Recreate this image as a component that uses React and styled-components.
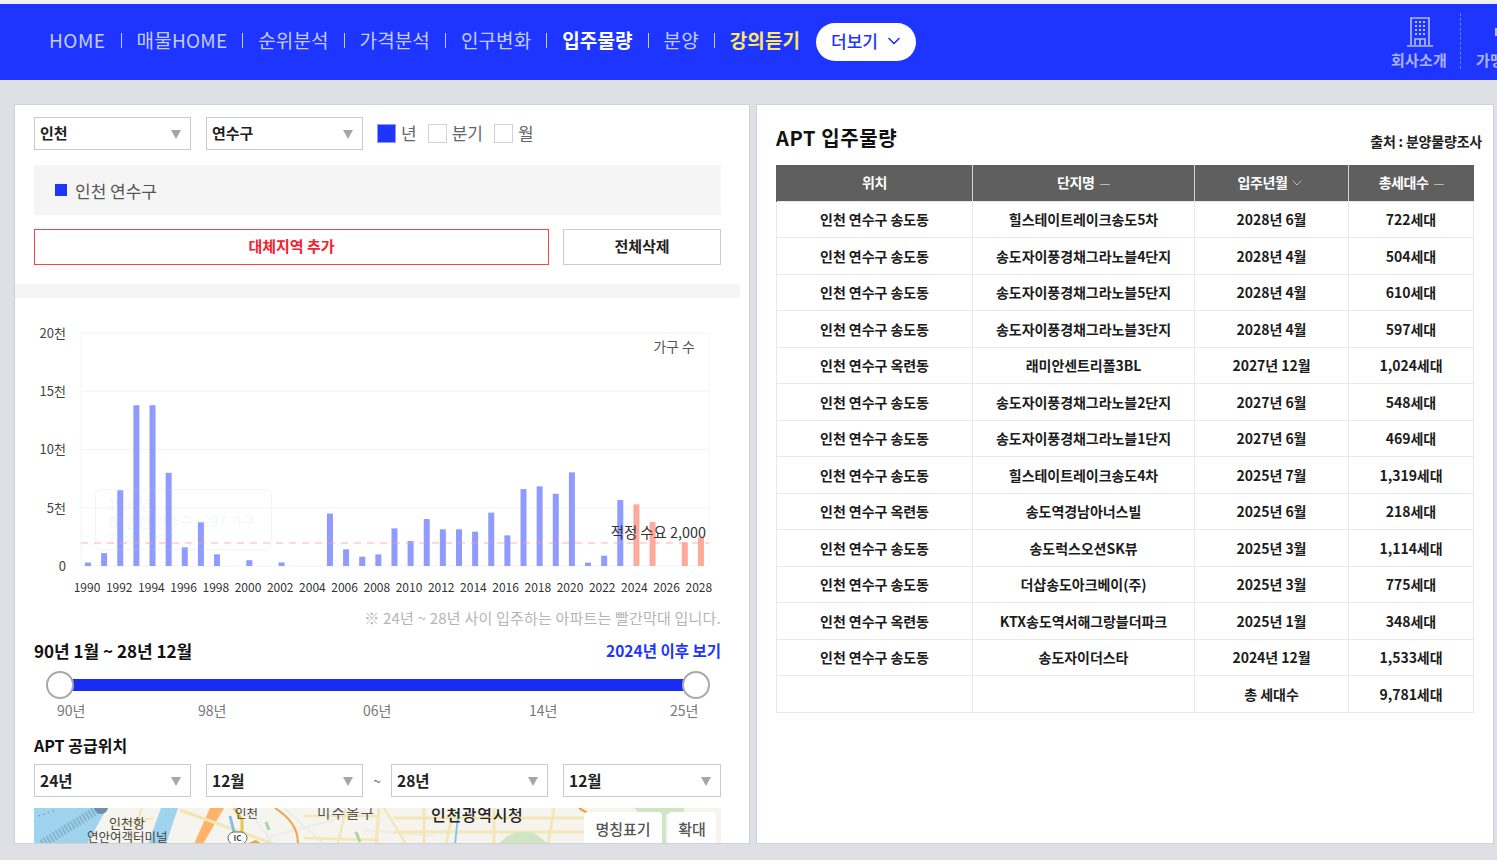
import React from "react";
import styled, { createGlobalStyle } from "styled-components";
import { ChevronDown } from "lucide-react";

const font = `"Noto Sans CJK KR", "Noto Sans", sans-serif`;

const GlobalStyle = createGlobalStyle`
  html, body {
    margin: 0;
    height: 860px;
    overflow: hidden;
    background: #dfe0e5;
    font-family: ${font};
  }
  * { box-sizing: border-box; }
`;

const menu = [
  { label: "HOME", spacing: 0.5 },
  { label: "매물HOME", spacing: 0.2 },
  { label: "순위분석" },
  { label: "가격분석" },
  { label: "인구변화" },
  { label: "입주물량", active: true },
  { label: "분양" },
  { label: "강의듣기", accent: true },
];

const rows = [
  ["인천 연수구 송도동", "힐스테이트레이크송도5차", "2028년 6월", "722세대"],
  ["인천 연수구 송도동", "송도자이풍경채그라노블4단지", "2028년 4월", "504세대"],
  ["인천 연수구 송도동", "송도자이풍경채그라노블5단지", "2028년 4월", "610세대"],
  ["인천 연수구 송도동", "송도자이풍경채그라노블3단지", "2028년 4월", "597세대"],
  ["인천 연수구 옥련동", "래미안센트리폴3BL", "2027년 12월", "1,024세대"],
  ["인천 연수구 송도동", "송도자이풍경채그라노블2단지", "2027년 6월", "548세대"],
  ["인천 연수구 송도동", "송도자이풍경채그라노블1단지", "2027년 6월", "469세대"],
  ["인천 연수구 송도동", "힐스테이트레이크송도4차", "2025년 7월", "1,319세대"],
  ["인천 연수구 옥련동", "송도역경남아너스빌", "2025년 6월", "218세대"],
  ["인천 연수구 송도동", "송도럭스오션SK뷰", "2025년 3월", "1,114세대"],
  ["인천 연수구 송도동", "더샵송도아크베이(주)", "2025년 3월", "775세대"],
  ["인천 연수구 옥련동", "KTX송도역서해그랑블더파크", "2025년 1월", "348세대"],
  ["인천 연수구 송도동", "송도자이더스타", "2024년 12월", "1,533세대"],
  ["", "", "총 세대수", "9,781세대"],
];

// 1990 ~ 2028
const supply = [
  297, 1100, 6500, 13800, 13800, 8000, 1600, 3750, 1000, 0, 500, 0, 300, 0, 0,
  4500, 1430, 800, 1000, 3230, 2150, 4030, 3150, 3150, 2950, 4580, 2630, 6600,
  6840, 6200, 8040, 290, 890, 5660, 5290, 3774, 0, 2041, 2433,
];

const Page = styled.div`
  width: 1497px;
  height: 860px;
  border-top: 4px solid #f1f1f3;
  overflow: hidden;
`;

const TopBar = styled.header`
  display: flex;
  height: 76px;
  background: #1e35ff;
  overflow: hidden;
`;

const Menu = styled.nav`
  flex: 0 0 1391px;
  display: flex;
  align-items: center;
  padding-left: 49px;
`;

const MenuItem = styled.a`
  margin-bottom: 6px;
  font-size: 19px;
  font-weight: ${(p) => (p.$strong ? 700 : 400)};
  letter-spacing: ${(p) => p.$spacing || 0.1}px;
  color: ${(p) => (p.$accent ? "#ffe95c" : p.$active ? "#fff" : "#c4ccff")};
  white-space: nowrap;
`;

const MenuBar = styled.i`
  width: 1px;
  height: 15px;
  margin: 0 15px 3px;
  background: #c4ccff;
`;

const MoreButton = styled.button`
  display: flex;
  align-items: center;
  gap: 6px;
  width: 100px;
  height: 38px;
  margin-left: 16px;
  padding: 0 0 3px 15px;
  border: 0;
  border-radius: 19px;
  background: #fff;
  color: #1e35ff;
  font: 500 17px ${font};
`;

const Utility = styled.div`
  flex: 0 0 ${(p) => (p.$cut ? "120px" : "70px")};
  display: flex;
  flex-direction: column;
  align-items: flex-start;
  height: ${(p) => (p.$cut ? "76px" : "56px")};
  margin: ${(p) => (p.$cut ? "0" : "9px 0 11px")};
  padding: ${(p) => (p.$cut ? "13px 0 0 15px" : "4px 0 0")};
  border-right: ${(p) => (p.$cut ? "0" : "1px dashed rgba(255,255,255,.35)")};
`;

const UtilityIcon = styled.svg`
  display: block;
  width: 58px;
  height: 30px;
  flex: none;
`;

const UtilityText = styled.span`
  margin-top: 4px;
  font-size: 15px;
  line-height: 18px;
  font-weight: 700;
  letter-spacing: 0.2px;
  color: #aab3ff;
  white-space: nowrap;
`;

const Content = styled.main`
  display: flex;
  gap: 6px;
  padding: 24px 0 0 14px;
`;

const Panel = styled.section`
  flex: none;
  width: ${(p) => p.$w}px;
  height: 740px;
  overflow: hidden;
  background: #fff;
  border: 1px solid #cfd1d8;
`;

const LeftPanel = styled(Panel)`
  padding: 12px 28px 0 19px;
`;

const RightPanel = styled(Panel)`
  padding: 20px 0 0 19px;
`;

const FilterRow = styled.div`
  display: flex;
  align-items: center;
  gap: 15px;
`;

const SelectBox = styled.div`
  position: relative;
  flex: none;
  width: 157px;
  height: 33px;
  padding-left: 5px;
  border: 1px solid #c6cad3;
  background: #fff;
  color: #222;
  font-size: 15px;
  font-weight: 700;
  line-height: 30px;
  &::after {
    content: "";
    position: absolute;
    top: 12px;
    right: 9px;
    border-top: 9px solid #a6a6a6;
    border-left: 5px solid transparent;
    border-right: 5px solid transparent;
  }
`;

const PeriodGroup = styled.div`
  display: flex;
  align-items: center;
  margin-left: -1px;
`;

const PeriodBox = styled.span`
  width: 19px;
  height: 19px;
  margin-left: ${(p) => (p.$first ? "0" : "11px")};
  border: 1px solid ${(p) => (p.$on ? "#8d98ff" : "#cfd2d9")};
  background: ${(p) => (p.$on ? "#1e35ff" : "#fff")};
`;

const PeriodLabel = styled.span`
  margin: -2px 0 0 5px;
  font-size: 17px;
  color: #666;
`;

const RegionBox = styled.div`
  display: flex;
  align-items: center;
  gap: 8px;
  height: 50px;
  margin-top: 15px;
  padding-left: 21px;
  background: #f5f5f5;
  color: #555;
  font-size: 17px;
`;

const RegionMark = styled.i`
  width: 12px;
  height: 12px;
  background: #1e35ff;
`;

const ActionRow = styled.div`
  display: flex;
  gap: 14px;
  margin-top: 14px;
`;

const ActionButton = styled.button`
  flex: ${(p) => (p.$danger ? "0 0 515px" : "1")};
  height: 36px;
  padding: 0 0 3px;
  border: 1px solid ${(p) => (p.$danger ? "#f0474b" : "#c9ccd3")};
  background: #fff;
  color: ${(p) => (p.$danger ? "#f5222d" : "#222")};
  font: 700 15px ${font};
`;

const Band = styled.div`
  height: 14px;
  margin: 19px -19px 0;
  background: #f5f5f6;
`;

const ChartWrap = styled.div`
  position: relative;
  height: 280px;
  margin-top: 22px;
`;

const ChartSvg = styled.svg`
  display: block;
  width: 687px;
  height: 280px;
  font-family: ${font};
`;

const GhostTip = styled.div`
  position: absolute;
  left: 61px;
  top: 169px;
  width: 177px;
  height: 61px;
  padding: 6px 12px;
  border: 1px solid rgba(190, 205, 255, 0.22);
  border-radius: 6px;
  color: rgba(170, 185, 245, 0.16);
  font-size: 14px;
  line-height: 17px;
  white-space: nowrap;
`;

const Note = styled.p`
  margin: 8px 0 0;
  color: #b5b5b5;
  font-size: 15px;
  letter-spacing: 0.2px;
  line-height: 20px;
  text-align: right;
`;

const RangeHead = styled.div`
  display: flex;
  justify-content: space-between;
  align-items: center;
  height: 24px;
  margin-top: 10px;
`;

const RangeTitle = styled.strong`
  color: #111;
  font-size: 17px;
  font-weight: 700;
`;

const RangeLink = styled.a`
  color: #1e35ff;
  font-size: 15.5px;
  font-weight: 700;
`;

const Slider = styled.div`
  position: relative;
  display: flex;
  align-items: center;
  height: 28px;
  margin: 9px 25px 0 26px;
`;

const SliderFill = styled.div`
  width: 100%;
  height: 12px;
  background: #1a2bf5;
`;

const SliderThumb = styled.span`
  position: absolute;
  top: 0;
  ${(p) => (p.$end ? "right: -14px;" : "left: -14px;")}
  width: 28px;
  height: 28px;
  border: 2px solid #a9a9a9;
  border-radius: 50%;
  background: #fff;
`;

const Ticks = styled.div`
  display: grid;
  grid-template-columns: 141px 165px 166px 141px 28px;
  height: 20px;
  margin-top: 1px;
  padding-left: 23px;
  color: #777;
  font-size: 14px;
  line-height: 20px;
  white-space: nowrap;
`;

const SubTitle = styled.h3`
  margin: 14px 0 0;
  color: #111;
  font-size: 16px;
  font-weight: 700;
  line-height: 22px;
`;

const RangeSelects = styled.div`
  display: flex;
  align-items: center;
  margin-top: 8px;
`;

const Tilde = styled.span`
  flex: 0 0 28px;
  color: #666;
  font-size: 13px;
  text-align: center;
`;

const RangeSelect = styled(SelectBox)`
  margin-right: ${(p) => p.$gap || 0}px;
  font-size: 15.5px;
  &:last-child {
    width: 158px;
  }
`;

const MapBox = styled.div`
  position: relative;
  height: 60px;
  margin-top: 11px;
`;

const MapSvg = styled.svg`
  display: block;
  width: 687px;
  height: 60px;
  font-family: ${font};
`;

const MapTools = styled.div`
  position: absolute;
  top: 4px;
  right: 5px;
  display: flex;
  gap: 6px;
`;

const MapTool = styled.button`
  width: ${(p) => p.$w}px;
  height: 40px;
  padding: 0 0 8px;
  border: 0;
  border-radius: 4px;
  background: #fff;
  color: #555;
  font: 500 15px ${font};
`;

const TableHead = styled.div`
  display: flex;
  align-items: flex-end;
  justify-content: space-between;
  height: 26px;
  margin: 0 11px 14px 0;
`;

const TableTitle = styled.h2`
  margin: 0;
  color: #111;
  font-size: 20px;
  line-height: 26px;
  font-weight: 700;
  letter-spacing: 0.6px;
`;

const Source = styled.span`
  color: #222;
  font-size: 14px;
  font-weight: 700;
  letter-spacing: -0.2px;
  line-height: 20px;
`;

const SupplyTable = styled.table`
  width: 697px;
  table-layout: fixed;
  border-collapse: collapse;
`;

const HeadCell = styled.th`
  width: ${(p) => p.$w}px;
  height: 36px;
  padding: 0 0 2px;
  border-left: 1px solid #d5d5d5;
  background: #5f5f5f;
  color: #fff;
  font-size: 14px;
  font-weight: 700;
  letter-spacing: -0.4px;
  &:first-child {
    border-left: 1px solid #5f5f5f;
  }
`;

const SortMark = styled.span`
  margin-left: 5px;
  color: #c9c9c9;
  font-size: 12px;
  font-weight: 400;
`;

const SortChevron = styled(ChevronDown)`
  margin-left: 2px;
  vertical-align: -3px;
  color: #c9c9c9;
`;

const BodyRow = styled.tr`
  height: 36.5px;
`;

const BodyCell = styled.td`
  padding: 0;
  border: 1px solid #e8e8e8;
  color: #1c1c1c;
  font-size: 14px;
  font-weight: 700;
  letter-spacing: -0.05px;
  text-align: center;
  white-space: nowrap;
`;

const px = (x) => x - 34;
const py = (y) => y - 320;
const barY = (v) => 566 - (v / 5000) * 58.25;

const BuildingIcon = () => (
  <UtilityIcon viewBox="0 0 58 30" fill="none" stroke="#b4bcff" strokeWidth="1.6">
    <path d="M20 28V1h18v27M16 29h26" />
    <path d="M24 28v-6h10v6M29 22v6" />
    <path
      d="M24 5h2M28 5h2M32 5h2M24 9h2M28 9h2M32 9h2M24 13h2M28 13h2M32 13h2M24 17h2M28 17h2M32 17h2"
      strokeWidth="2"
    />
  </UtilityIcon>
);

const SupplyChart = () => (
  <ChartSvg viewBox="0 0 687 280">
    {[333, 391.25, 449.5, 507.75, 566].map((y) => (
      <line key={y} x1={px(81)} x2={px(709)} y1={py(y)} y2={py(y)} stroke="#f2f3f6" />
    ))}
    <line x1={px(81)} x2={px(81)} y1={py(333)} y2={py(566)} stroke="#f2f3f6" />
    <line x1={px(709)} x2={px(709)} y1={py(333)} y2={py(566)} stroke="#f5f5f7" />
    {["20천", "15천", "10천", "5천", "0"].map((t, i) => (
      <text key={t} x={px(66)} y={py(338 + i * 58.2)} textAnchor="end" fontSize="13" fill="#444">
        {t}
      </text>
    ))}
    {supply.map((v, i) => (
      <rect
        key={i}
        x={px(88 + i * 16.13 - 3)}
        y={py(barY(v))}
        width="6"
        height={566 - barY(v)}
        fill={i >= 34 ? "#ffa99c" : "#8f9bff"}
      />
    ))}
    <line
      x1={px(81)}
      x2={px(709)}
      y1={py(543)}
      y2={py(543)}
      stroke="#ff9c9c"
      strokeOpacity="0.75"
      strokeDasharray="7 6"
      strokeWidth="1.2"
    />
    {supply.map((_, i) =>
      i % 2 === 0 ? (
        <text
          key={i}
          x={px(87 + i * 16.1)}
          y={py(592)}
          textAnchor="middle"
          fontSize="12"
          fill="#333"
        >
          {1990 + i}
        </text>
      ) : null
    )}
    <text x={px(695)} y={py(352)} textAnchor="end" fontSize="14" fill="#555">
      가구 수
    </text>
    <text x={px(706)} y={py(538)} textAnchor="end" fontSize="14.4" fill="#333">
      적정 수요 2,000
    </text>
  </ChartSvg>
);

const AreaMap = () => (
  <MapSvg viewBox="0 0 687 60">
    <rect width="687" height="60" fill="#f5f4ef" />
    <path d="M0 0H73L53 36H0Z" fill="#9fd3ee" />
    <path d="M127 0H144L132 36H114Z" fill="#9fd3ee" />
    <path d="M8 36L66 0" stroke="#7fa9c0" strokeWidth="9" strokeDasharray="2 1.5" opacity="0.7" />
    <path d="M4 8L22 2" stroke="#7fa9c0" strokeWidth="1.4" strokeDasharray="2 3" />
    <circle cx="67" cy="-1" r="7" fill="#6c8fb0" />
    <path d="M108 0L96 36M78 18L120 10" stroke="#f5e7b0" strokeWidth="2" />
    <path d="M176 0L190 0L169 36H160Z" fill="#fdb36a" />
    <path d="M146 2L240 36" stroke="#f3e5ae" strokeWidth="3" />
    <path d="M200 0L208 12V24" stroke="#e8c64a" strokeWidth="3" fill="none" />
    <path d="M196 8L200 24" stroke="#7fc0ea" strokeWidth="3" />
    <path d="M212 0L240 36M232 30L300 12M330 22L400 28M250 0L290 36" stroke="#ececec" strokeWidth="2" fill="none" />
    <path d="M241 0C256 10 264 20 264 36" stroke="#f5a33f" strokeWidth="2" fill="none" />
    <path d="M270 8H345M270 30L345 32M312 0L304 36M350 0L372 36" stroke="#f3e7b8" strokeWidth="2.5" fill="none" />
    <path d="M232 14l3 8M322 24l4 10" stroke="#a9d59f" strokeWidth="3" />
    <path d="M345 0L342 36M360 10H570M390 0V36M420 0L412 36M460 0V36M520 0L514 36M360 24H560" stroke="#f3e7b8" strokeWidth="3" fill="none" />
    <path d="M425 0L421 36" stroke="#8fc2ea" strokeWidth="2" />
    <path d="M465 36C474 24 492 20 505 28L514 36Z" fill="#cfe6c4" />
    <path d="M545 0L565 12L557 28H575" stroke="#f5a33f" strokeWidth="2.4" fill="none" />
    <path d="M600 0H650V6H632V36H622V6H606Z" fill="#cfe6c4" />
    <path d="M212 36L222 32L228 36Z" fill="#f5a33f" />
    <rect x="194" y="24" width="19" height="12" rx="6" fill="#fff" stroke="#666" />
    <text x="203.5" y="33" textAnchor="middle" fontSize="8" fontWeight="700" fill="#444">
      IC
    </text>
    <text x="75" y="20" fontSize="13" fill="#444">
      인천항
    </text>
    <text x="53" y="34" fontSize="12.5" fill="#444">
      연안여객터미널
    </text>
    <text x="201" y="10" fontSize="12.5" fill="#444">
      인천
    </text>
    <text x="283" y="10" fontSize="14.5" fill="#555" letterSpacing="1.2">
      미주올구
    </text>
    <text x="397" y="13" fontSize="16" fontWeight="500" fill="#222" letterSpacing="0.7">
      인천광역시청
    </text>
  </MapSvg>
);

export default function App() {
  return (
    <Page>
      <GlobalStyle />
      <TopBar>
        <Menu>
          {menu.map((m, i) => (
            <React.Fragment key={m.label}>
              {i > 0 && <MenuBar />}
              <MenuItem
                $strong={m.active || m.accent}
                $active={m.active}
                $accent={m.accent}
                $spacing={m.spacing}
              >
                {m.label}
              </MenuItem>
            </React.Fragment>
          ))}
          <MoreButton>
            더보기
            <ChevronDown size={20} strokeWidth={2} />
          </MoreButton>
        </Menu>
        <Utility>
          <BuildingIcon />
          <UtilityText>회사소개</UtilityText>
        </Utility>
        <Utility $cut>
          <UtilityIcon viewBox="0 0 58 30" fill="#b4bcff">
            <rect x="19" y="11" width="6" height="8" />
          </UtilityIcon>
          <UtilityText>가맹문의</UtilityText>
        </Utility>
      </TopBar>
      <Content>
        <LeftPanel $w={736}>
          <FilterRow>
            <SelectBox>인천</SelectBox>
            <SelectBox>연수구</SelectBox>
            <PeriodGroup>
              <PeriodBox $first $on />
              <PeriodLabel>년</PeriodLabel>
              <PeriodBox />
              <PeriodLabel>분기</PeriodLabel>
              <PeriodBox />
              <PeriodLabel>월</PeriodLabel>
            </PeriodGroup>
          </FilterRow>
          <RegionBox>
            <RegionMark />
            인천 연수구
          </RegionBox>
          <ActionRow>
            <ActionButton $danger>대체지역 추가</ActionButton>
            <ActionButton>전체삭제</ActionButton>
          </ActionRow>
          <Band />
          <ChartWrap>
            <SupplyChart />
            <GhostTip>
              1990년
              <br />
              ▩ 인천 연수구 : 297 가구
              <br />
              Total : 297
            </GhostTip>
          </ChartWrap>
          <Note>※ 24년 ~ 28년 사이 입주하는 아파트는 빨간막대 입니다.</Note>
          <RangeHead>
            <RangeTitle>90년 1월 ~ 28년 12월</RangeTitle>
            <RangeLink>2024년 이후 보기</RangeLink>
          </RangeHead>
          <Slider>
            <SliderFill />
            <SliderThumb />
            <SliderThumb $end />
          </Slider>
          <Ticks>
            <span>90년</span>
            <span>98년</span>
            <span>06년</span>
            <span>14년</span>
            <span>25년</span>
          </Ticks>
          <SubTitle>APT 공급위치</SubTitle>
          <RangeSelects>
            <RangeSelect $gap={15}>24년</RangeSelect>
            <RangeSelect>12월</RangeSelect>
            <Tilde>~</Tilde>
            <RangeSelect $gap={15}>28년</RangeSelect>
            <RangeSelect>12월</RangeSelect>
          </RangeSelects>
          <MapBox>
            <AreaMap />
            <MapTools>
              <MapTool $w={78}>명칭표기</MapTool>
              <MapTool $w={48}>확대</MapTool>
            </MapTools>
          </MapBox>
        </LeftPanel>
        <RightPanel $w={738}>
          <TableHead>
            <TableTitle>APT 입주물량</TableTitle>
            <Source>출처 : 분양물량조사</Source>
          </TableHead>
          <SupplyTable>
            <thead>
              <tr>
                <HeadCell $w={196}>위치</HeadCell>
                <HeadCell $w={222}>
                  단지명<SortMark>—</SortMark>
                </HeadCell>
                <HeadCell $w={154}>
                  입주년월
                  <SortChevron size={16} strokeWidth={1.3} />
                </HeadCell>
                <HeadCell $w={125}>
                  총세대수<SortMark>—</SortMark>
                </HeadCell>
              </tr>
            </thead>
            <tbody>
              {rows.map((r, i) => (
                <BodyRow key={i}>
                  {r.map((c, j) => (
                    <BodyCell key={j}>{c}</BodyCell>
                  ))}
                </BodyRow>
              ))}
            </tbody>
          </SupplyTable>
        </RightPanel>
      </Content>
    </Page>
  );
}
